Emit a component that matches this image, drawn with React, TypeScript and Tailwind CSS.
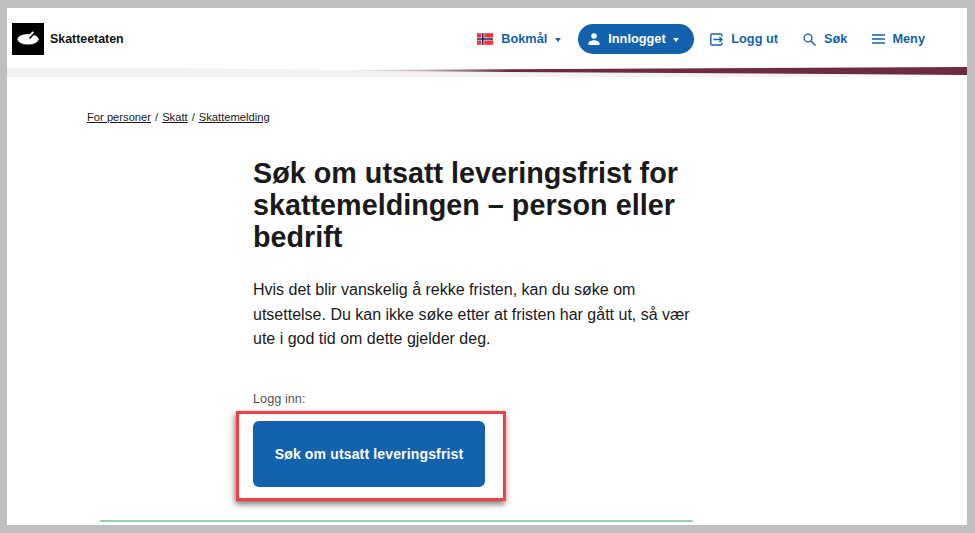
export default function App() {
  const font = { fontFamily: '"Liberation Sans", Arial, sans-serif' };
  return (
    <div className="h-[533px] w-[975px] overflow-hidden bg-[#bfbfbf] pt-2 pb-2 pl-[7px] pr-2" style={font}>
      <div className="relative flex h-[517px] w-[960px] flex-col overflow-hidden bg-white font-['Liberation_Sans',Arial,sans-serif]">
        <header className="flex h-[60px] shrink-0 items-center pl-[5px] pr-[42px] pt-[2px]">
          <div className="flex items-center gap-[6px]">
            <div className="flex h-8 w-8 items-center justify-center bg-black">
              <svg width="32" height="32" viewBox="0 0 32 32">
                <ellipse cx="16" cy="16.2" rx="10.6" ry="5.2" fill="#fff" />
                <path d="M17.5 15.5L22.5 10" stroke="#000" strokeWidth="1.8" />
                <path d="M15.5 14.5L21.3 9" stroke="#fff" strokeWidth="1.8" />
              </svg>
            </div>
            <span className="text-[12.4px] font-bold text-[#111]">Skatteetaten</span>
          </div>
          <nav className="ml-auto flex items-center text-[12.75px] font-bold text-[#1362ae]">
            <div className="flex items-center">
              <svg width="16" height="12" viewBox="0 0 22 16" className="mr-2">
                <rect width="22" height="16" fill="#ef3340" />
                <rect x="6" width="4" height="16" fill="#fff" />
                <rect y="6" width="22" height="4" fill="#fff" />
                <rect x="7" width="2" height="16" fill="#00205b" />
                <rect y="7" width="22" height="2" fill="#00205b" />
              </svg>
              <span>Bokmål</span>
              <span className="ml-[8px] mt-[1px] h-0 w-0 border-x-[3.5px] border-t-[4px] border-x-transparent border-t-[#1362ae]" />
            </div>
            <div className="ml-[17px] flex h-[30px] w-[116px] items-center rounded-full bg-[#1362ae] pl-[10px] text-white">
              <svg width="12" height="12" viewBox="0 0 12 12" fill="#fff">
                <circle cx="6" cy="3" r="2.8" />
                <path d="M0.5 12V10.5C0.5 8.5 3.5 7.3 6 7.3C8.5 7.3 11.5 8.5 11.5 10.5V12Z" />
              </svg>
              <span className="ml-[8px]">Innlogget</span>
              <span className="ml-[7px] mt-[1px] h-0 w-0 border-x-[3.5px] border-t-[4px] border-x-transparent border-t-white" />
            </div>
            <div className="ml-[16px] flex items-center gap-[8px]">
              <svg width="13" height="13" viewBox="0 0 13 13" fill="none" stroke="#1362ae" strokeWidth="1.4">
                <path d="M11.8 3.5V2C11.8 1.4 11.4 1 10.8 1H1.8C1.2 1 0.8 1.4 0.8 2V11C0.8 11.6 1.2 12 1.8 12H10.8C11.4 12 11.8 11.6 11.8 11V9.5" />
                <path d="M3.5 6.5H12M9.4 4L12 6.5L9.4 9" />
              </svg>
              <span>Logg ut</span>
            </div>
            <div className="ml-[25px] flex items-center gap-[8px]">
              <svg width="13" height="13" viewBox="0 0 13 13" fill="none" stroke="#1362ae" strokeWidth="1.4">
                <circle cx="5" cy="5" r="3.9" />
                <path d="M8 8L12.5 12.5" />
              </svg>
              <span>Søk</span>
            </div>
            <div className="ml-[25px] flex items-center gap-[7px]">
              <svg width="13" height="10" viewBox="0 0 13 10" stroke="#1362ae" strokeWidth="1.3">
                <path d="M0 1H13M0 5H13M0 9H13" />
              </svg>
              <span>Meny</span>
            </div>
          </nav>
        </header>
        <div className="relative h-[9px] shrink-0 bg-[linear-gradient(to_right,#f2f2f2_0%,#f2f2f2_85%,#fbfbfb_92%,#ffffff_100%)]">
          <svg className="absolute -top-[1px] left-0" width="960" height="10" viewBox="0 0 960 10">
            <defs>
              <linearGradient id="wine" x1="340" y1="0" x2="960" y2="0" gradientUnits="userSpaceOnUse">
                <stop offset="0" stopColor="#6e2a3f" stopOpacity="0" />
                <stop offset="0.12" stopColor="#6e2a3f" stopOpacity="0.3" />
                <stop offset="0.26" stopColor="#6e2a3f" stopOpacity="1" />
                <stop offset="1" stopColor="#6e2a3f" stopOpacity="1" />
              </linearGradient>
            </defs>
            <polygon points="150,1 340,3 960,0 150,0" fill="#fff" />
            <polygon points="340,3 960,0 960,8 340,3.8" fill="url(#wine)" />
          </svg>
        </div>
        <main className="flex flex-col pl-[80px]">
          <nav className="mt-[34px] flex items-center gap-[4px] text-[11.2px] leading-[13px] text-[#1a1a1a]">
            <span className="underline">For personer</span>
            <span>/</span>
            <span className="underline">Skatt</span>
            <span>/</span>
            <span className="underline">Skattemelding</span>
          </nav>
          <div className="ml-[166px] w-[440px]">
            <h1 className="mt-[33px] text-[28.75px] font-bold leading-[32px] text-[#1a1a1a]">
              Søk om utsatt leveringsfrist for skattemeldingen – person eller bedrift
            </h1>
            <p className="mt-[25px] text-[16px] leading-[24.5px] text-[#1a1a1a]">
              Hvis det blir vanskelig å rekke fristen, kan du søke om utsettelse. Du kan ikke søke etter at fristen har gått ut, så vær ute i god tid om dette gjelder deg.
            </p>
            <div className="mt-[40px] text-[12.75px] leading-[14px] text-[#555]">Logg inn:</div>
            <button className="mt-[15px] flex h-[66px] w-[232px] items-center justify-center rounded-[6px] bg-[#1362ae] pt-[1px] text-[14px] font-bold tracking-[0.15px] text-white">
              Søk om utsatt leveringsfrist
            </button>
          </div>
          <div className="ml-[13px] mt-[33px] h-[2px] w-[593px] bg-[#93d3ae]" />
        </main>
        <div className="absolute left-[229px] top-[403px] h-[90px] w-[270px] border-[3px] border-[#f73e42] shadow-[-1px_3px_6px_rgba(0,0,0,0.55)]" />
      </div>
    </div>
  );
}
